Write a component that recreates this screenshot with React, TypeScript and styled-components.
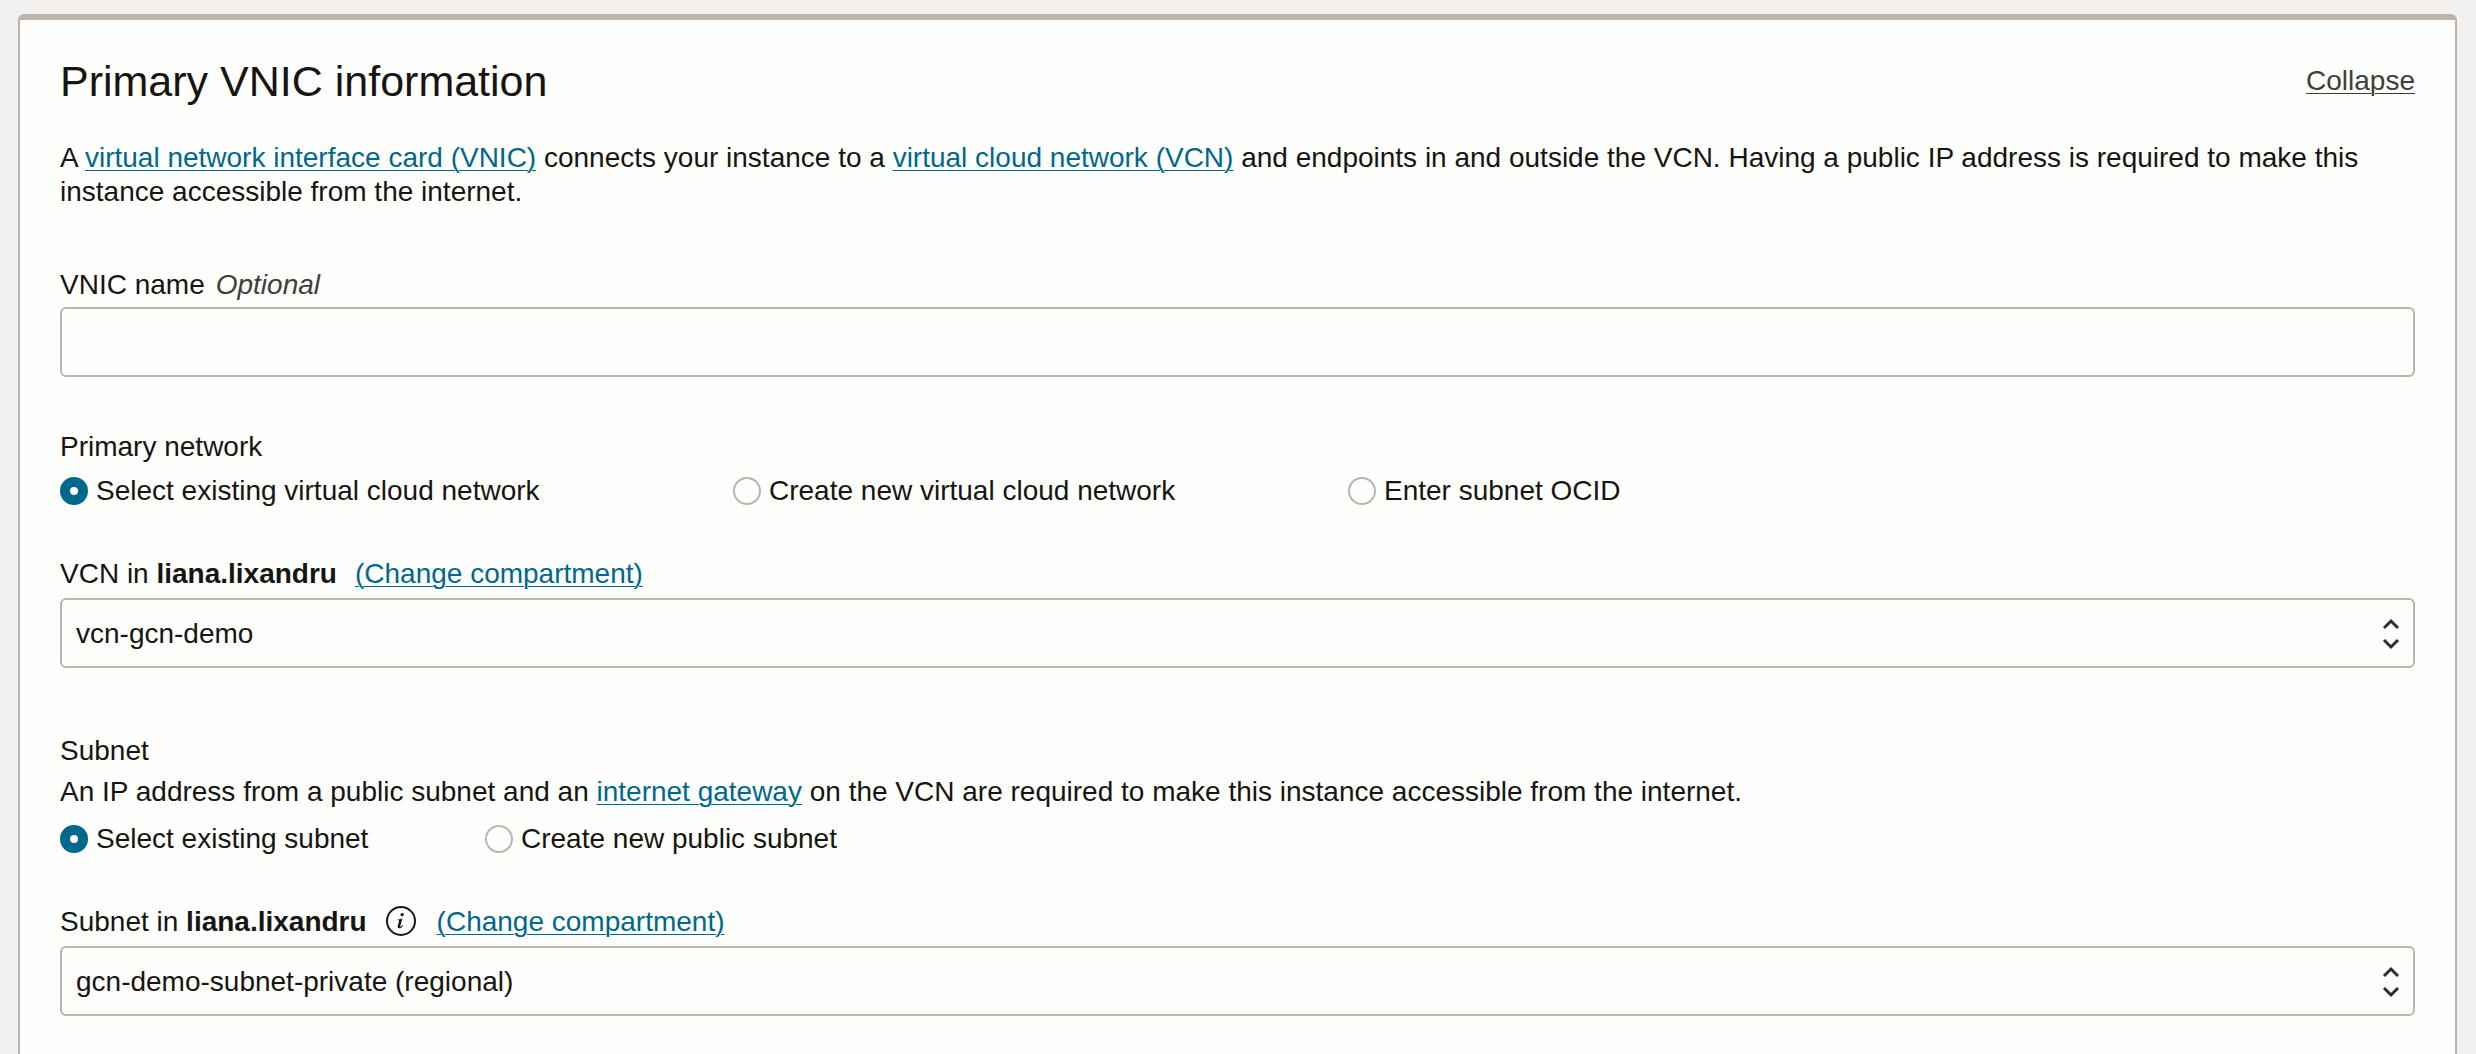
import React, { useState } from "react";
import styled, { createGlobalStyle } from "styled-components";

const color = {
  page: "#f3f1f0",
  card: "#fefefc",
  border: "#bbb5ae",
  text: "#161513",
  muted: "#403e3b",
  link: "#00688c",
};

const GlobalStyle = createGlobalStyle`
  *, *::before, *::after { box-sizing: border-box; }
  body {
    margin: 0;
    background: ${color.page};
    color: ${color.text};
    font: 28px/34px "Helvetica Neue", "Liberation Sans", Arial, sans-serif;
  }
`;

const Page = styled.main`
  display: flex;
  flex-direction: column;
  min-height: 100vh;
  padding: 14px 19px 0 18px;
`;

const Card = styled.section`
  flex: 1;
  padding: 36px 40px 38px;
  background: ${color.card};
  border: 2px solid ${color.border};
  border-top-width: 6px;
  border-bottom: 0;
  border-radius: 6px 6px 0 0;
`;

const CardHeader = styled.header`
  display: flex;
  align-items: center;
  justify-content: space-between;
`;

const Title = styled.h2`
  margin: 0;
  font-size: 43px;
  line-height: 50px;
  font-weight: 400;
`;

const CollapseButton = styled.button`
  padding: 0;
  border: 0;
  background: none;
  color: ${color.muted};
  font: inherit;
  text-decoration: underline 1px;
  text-underline-offset: 3px;
  cursor: pointer;
`;

const Link = styled.a`
  color: ${color.link};
  text-decoration: underline 1px;
  text-underline-offset: 3px;
`;

const Intro = styled.p`
  margin: 35px 0 59px;
`;

const Field = styled.div<{ $gap: number }>`
  display: flex;
  flex-direction: column;
  gap: ${(p) => p.$gap}px;
`;

const LabelRow = styled.div<{ $gap: number }>`
  display: flex;
  align-items: center;
  gap: ${(p) => p.$gap}px;
`;

const Optional = styled.em`
  color: ${color.muted};
`;

const TextInput = styled.input`
  width: 100%;
  height: 70px;
  padding: 0 14px;
  border: 2px solid ${color.border};
  border-radius: 6px;
  background: ${color.card};
  color: inherit;
  font: inherit;
`;

const SelectBox = styled.div`
  position: relative;
`;

const NativeSelect = styled.select`
  display: block;
  appearance: none;
  width: 100%;
  height: 70px;
  padding: 2px 60px 0 14px;
  border: 2px solid ${color.border};
  border-radius: 6px;
  background: ${color.card};
  color: inherit;
  font: inherit;
`;

const SelectArrows = styled.svg`
  position: absolute;
  top: 20px;
  right: 14px;
  pointer-events: none;
`;

const RadioGroup = styled.fieldset`
  min-width: 0;
  margin: 0;
  padding: 53px 0 49px;
  border: 0;
`;

const SubnetGroup = styled(RadioGroup)`
  padding-top: 66px;
`;

const GroupTitle = styled.div``;

const Hint = styled.p`
  margin: 7px 0 0;
  padding-bottom: 3px;
`;

const Options = styled.div<{ $columns: string }>`
  display: grid;
  grid-template-columns: ${(p) => p.$columns};
  margin-top: 9px;
`;

const OptionLabel = styled.label`
  display: flex;
  align-items: center;
  gap: 8px;
`;

const OptionText = styled.span`
  padding-top: 1px;
`;

const RadioInput = styled.input`
  appearance: none;
  flex: none;
  width: 28px;
  height: 28px;
  margin: 0;
  border: 2px solid ${color.border};
  border-radius: 50%;
  background: ${color.card};

  &:checked {
    border: 10px solid ${color.link};
  }
`;

const InfoButton = styled.button`
  display: flex;
  margin-right: 2px;
  padding: 0;
  border: 0;
  background: none;
  color: inherit;
`;

function InfoIcon() {
  return (
    <svg width="32" height="32" viewBox="0 0 32 32" aria-hidden="true">
      <circle cx="16" cy="15" r="14" fill="none" stroke="currentColor" strokeWidth="2" />
      <circle cx="17.2" cy="8.6" r="1.7" fill="currentColor" />
      <path
        d="M12.600 13.600c1.700-.1 3.300-.5 4.800-1l-2.100 7.300c-.2.800.1 1 .6.700.6-.3 1.200-.9 1.800-1.700l.6.500c-1.300 1.900-2.600 2.800-3.900 2.800-1.500 0-2-.9-1.600-2.400l1.300-4.500c.2-.8 0-1.100-1.500-1.100z"
        fill="currentColor"
      />
    </svg>
  );
}

function Dropdown({ id, value }: { id: string; value: string }) {
  return (
    <SelectBox>
      <NativeSelect id={id} defaultValue={value}>
        <option value={value}>{value}</option>
      </NativeSelect>
      <SelectArrows width="20" height="32" viewBox="0 0 20 32" aria-hidden="true">
        <path d="M3 10l7-7 7 7M3 22l7 7 7-7" fill="none" stroke="#2f2d2b" strokeWidth="3" />
      </SelectArrows>
    </SelectBox>
  );
}

type OptionsProps = { name: string; items: string[]; columns: string };

function RadioOptions({ name, items, columns }: OptionsProps) {
  const [selected, setSelected] = useState(items[0]);
  return (
    <Options $columns={columns}>
      {items.map((item) => (
        <OptionLabel key={item}>
          <RadioInput
            type="radio"
            name={name}
            checked={selected === item}
            onChange={() => setSelected(item)}
          />
          <OptionText>{item}</OptionText>
        </OptionLabel>
      ))}
    </Options>
  );
}

export default function App() {
  return (
    <>
      <GlobalStyle />
      <Page>
        <Card>
          <CardHeader>
            <Title>Primary VNIC information</Title>
            <CollapseButton type="button">Collapse</CollapseButton>
          </CardHeader>
          <Intro>
            A <Link href="#vnic">virtual network interface card (VNIC)</Link> connects your instance to a{" "}
            <Link href="#vcn">virtual cloud network (VCN)</Link> and endpoints in and outside the VCN. Having a
            public IP address is required to make this instance accessible from the internet.
          </Intro>

          <Field $gap={5}>
            <LabelRow $gap={11}>
              <label htmlFor="vnic-name">VNIC name</label>
              <Optional>Optional</Optional>
            </LabelRow>
            <TextInput id="vnic-name" type="text" />
          </Field>

          <RadioGroup aria-labelledby="network-title">
            <GroupTitle id="network-title">Primary network</GroupTitle>
            <RadioOptions
              name="network"
              columns="673px 615px auto"
              items={[
                "Select existing virtual cloud network",
                "Create new virtual cloud network",
                "Enter subnet OCID",
              ]}
            />
          </RadioGroup>

          <Field $gap={7}>
            <LabelRow $gap={18}>
              <label htmlFor="vcn">
                VCN in <strong>liana.lixandru</strong>
              </label>
              <Link href="#vcn-compartment">(Change compartment)</Link>
            </LabelRow>
            <Dropdown id="vcn" value="vcn-gcn-demo" />
          </Field>

          <SubnetGroup aria-labelledby="subnet-title">
            <GroupTitle id="subnet-title">Subnet</GroupTitle>
            <Hint>
              An IP address from a public subnet and an <Link href="#gateway">internet gateway</Link> on the VCN
              are required to make this instance accessible from the internet.
            </Hint>
            <RadioOptions
              name="subnet"
              columns="425px auto"
              items={["Select existing subnet", "Create new public subnet"]}
            />
          </SubnetGroup>

          <Field $gap={7}>
            <LabelRow $gap={18}>
              <label htmlFor="subnet">
                Subnet in <strong>liana.lixandru</strong>
              </label>
              <InfoButton type="button" aria-label="About subnets">
                <InfoIcon />
              </InfoButton>
              <Link href="#subnet-compartment">(Change compartment)</Link>
            </LabelRow>
            <Dropdown id="subnet" value="gcn-demo-subnet-private (regional)" />
          </Field>
        </Card>
      </Page>
    </>
  );
}
